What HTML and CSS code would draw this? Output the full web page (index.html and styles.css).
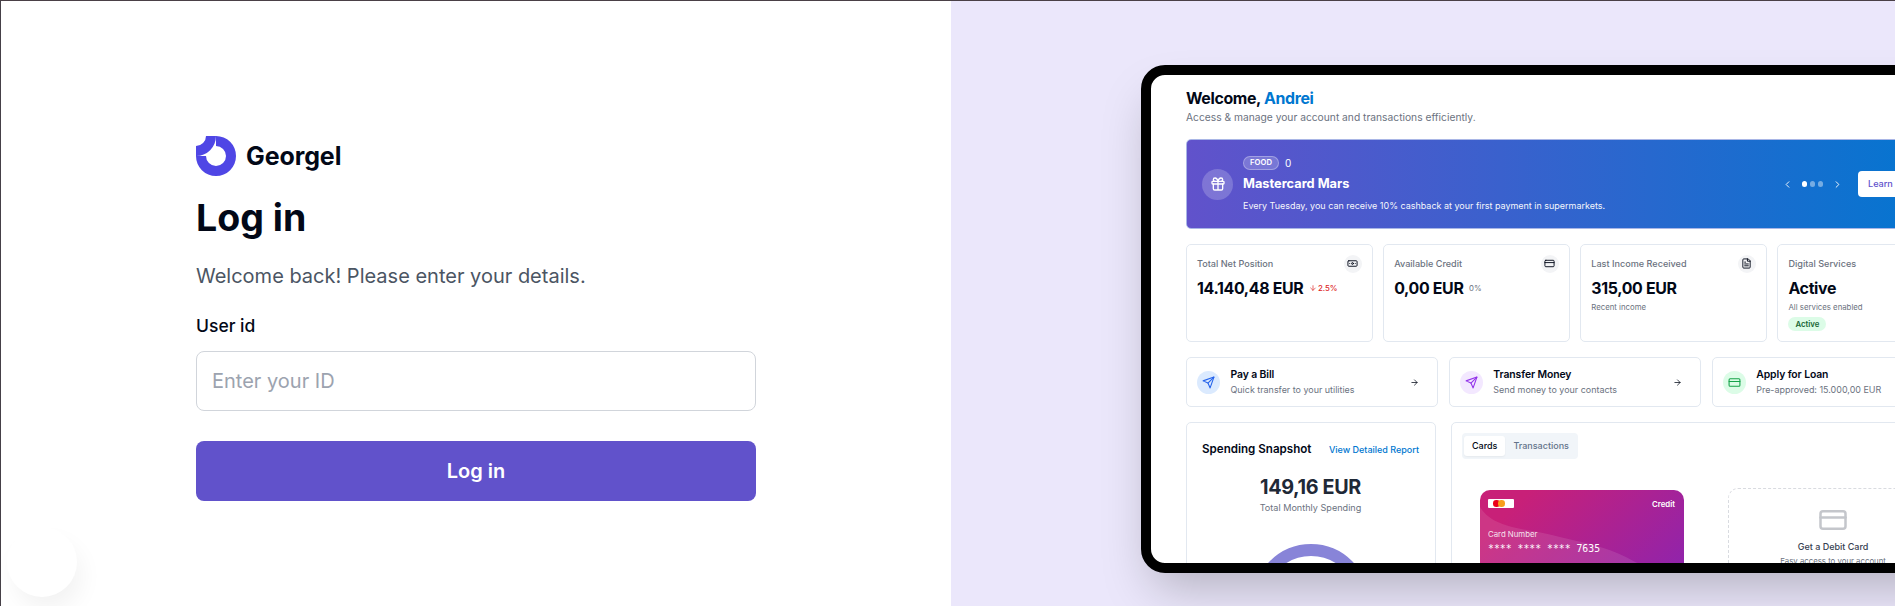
FILE: index.html
```html
<!DOCTYPE html>
<html lang="en">
<head>
<meta charset="utf-8">
<title>Georgel - Log in</title>
<link rel="stylesheet" href="styles.css">
</head>
<body>
<svg width="0" height="0" class="defs">
  <symbol id="send" viewBox="0 0 24 24"><path d="m22 2-7 20-4-9-9-4Z"/><path d="M22 2 11 13"/></symbol>
  <symbol id="card" viewBox="0 0 24 24"><rect width="20" height="14" x="2" y="5" rx="2"/><path d="M2 10h20"/></symbol>
  <symbol id="arrow" viewBox="0 0 24 24"><path d="M5 12h14"/><path d="m12 5 7 7-7 7"/></symbol>
</svg>
<div class="page">
  <main class="login">
    <div class="brand">
      <svg class="logo" viewBox="0 0 40 40"><path fill-rule="evenodd" d="M10 0H20A20 20 0 1 1 0 20V10A10 10 0 0 0 10 0ZM20 0V10A10 10 0 1 1 10 20H0A20 20 0 0 0 20 0Z"/></svg>
      <span>Georgel</span>
    </div>
    <h1>Log in</h1>
    <p class="lead">Welcome back! Please enter your details.</p>
    <label for="uid">User id</label>
    <input id="uid" type="text" placeholder="Enter your ID">
    <button class="submit">Log in</button>
  </main>
  <div class="bubble"></div>

  <aside class="showcase">
    <div class="tablet"><div class="screen">
      <h2>Welcome, <b>Andrei</b></h2>
      <p class="sub">Access &amp; manage your account and transactions efficiently.</p>

      <section class="banner">
        <div class="gift"><svg class="icon" viewBox="0 0 24 24"><rect x="3" y="8" width="18" height="4" rx="1"/><path d="M12 8v13M19 12v7a2 2 0 0 1-2 2H7a2 2 0 0 1-2-2v-7M7.500 8a2.500 2.500 0 0 1 0-5A4.800 8 0 0 1 12 8a4.800 8 0 0 1 4.500-5 2.500 2.500 0 0 1 0 5"/></svg></div>
        <div class="offer">
          <div class="tags"><span class="tag">FOOD</span><span class="zero">0</span></div>
          <h3>Mastercard Mars</h3>
          <p>Every Tuesday, you can receive 10% cashback at your first payment in supermarkets.</p>
        </div>
        <div class="pager">
          <svg class="icon" viewBox="0 0 24 24"><path d="m15 18-6-6 6-6"/></svg>
          <div class="dots"><i class="on"></i><i></i><i></i></div>
          <svg class="icon" viewBox="0 0 24 24"><path d="m9 18 6-6-6-6"/></svg>
        </div>
        <div class="learn">Learn</div>
      </section>

      <section class="stats">
        <div class="stat">
          <div class="stat-head"><span>Total Net Position</span><span class="chip"><svg class="icon" viewBox="0 0 24 24"><rect width="20" height="12" x="2" y="6" rx="2"/><circle cx="12" cy="12" r="2"/><path d="M6 12h.01M18 12h.01"/></svg></span></div>
          <div class="amount"><strong>14.140,48 EUR</strong><span class="down"><svg class="icon" viewBox="0 0 24 24"><path d="M12 5v14"/><path d="m19 12-7 7-7-7"/></svg>2.5%</span></div>
        </div>
        <div class="stat">
          <div class="stat-head"><span>Available Credit</span><span class="chip"><svg class="icon"><use href="#card"/></svg></span></div>
          <div class="amount"><strong>0,00 EUR</strong><span class="flat">0%</span></div>
        </div>
        <div class="stat">
          <div class="stat-head"><span>Last Income Received</span><span class="chip"><svg class="icon" viewBox="0 0 24 24"><path d="M15 2H6a2 2 0 0 0-2 2v16a2 2 0 0 0 2 2h12a2 2 0 0 0 2-2V7Z"/><path d="M14 2v5h6M8 9h2M8 13h8M8 17h8"/></svg></span></div>
          <div class="amount"><strong>315,00 EUR</strong></div>
          <div class="note">Recent income</div>
        </div>
        <div class="stat">
          <div class="stat-head"><span>Digital Services</span><span class="chip"></span></div>
          <div class="amount"><strong>Active</strong></div>
          <div class="note">All services enabled</div>
          <span class="badge">Active</span>
        </div>
      </section>

      <section class="actions">
        <div class="action blue"><span class="disc"><svg class="icon"><use href="#send"/></svg></span><div class="what"><h4>Pay a Bill</h4><p>Quick transfer to your utilities</p></div><svg class="icon go"><use href="#arrow"/></svg></div>
        <div class="action purple"><span class="disc"><svg class="icon"><use href="#send"/></svg></span><div class="what"><h4>Transfer Money</h4><p>Send money to your contacts</p></div><svg class="icon go"><use href="#arrow"/></svg></div>
        <div class="action green"><span class="disc"><svg class="icon"><use href="#card"/></svg></span><div class="what"><h4>Apply for Loan</h4><p>Pre-approved: 15.000,00 EUR</p></div><svg class="icon go"><use href="#arrow"/></svg></div>
      </section>

      <section class="lower">
        <div class="spending">
          <div class="spend-head"><h3>Spending Snapshot</h3><a>View Detailed Report</a></div>
          <div class="total">149,16 EUR</div>
          <p>Total Monthly Spending</p>
          <svg class="donut" viewBox="0 0 116 116"><circle cx="58" cy="58" r="52"/></svg>
        </div>
        <div class="wallet">
          <div class="tabs"><span class="active">Cards</span><span>Transactions</span></div>
          <div class="cards">
            <div class="bankcard">
              <svg class="waves" viewBox="0 0 204 120" preserveAspectRatio="none"><path d="M0 17C14 40 48 38 80 47C112 55 150 58 204 108V120H0Z"/></svg>
              <div class="bank-top"><span class="mc"><i></i><i></i></span><span class="kind">Credit</span></div>
              <div class="num-label">Card Number</div>
              <div class="num">**** **** **** 7635</div>
            </div>
            <div class="debit">
              <svg class="icon"><use href="#card"/></svg>
              <h4>Get a Debit Card</h4>
              <p>Easy access to your account</p>
            </div>
          </div>
        </div>
      </section>
    </div></div>
  </aside>
</div>
</body>
</html>
```
FILE: styles.css
```css
* { box-sizing: border-box; margin: 0; padding: 0; }
body { font-family: Inter, "Liberation Sans", sans-serif; color: #020817; background: #fff; overflow: hidden; }
.defs { position: absolute; }
.page { position: relative; width: 1895px; height: 606px; display: flex; overflow: hidden; border-top: 1px solid #4a4046; border-left: 1px solid #454047; }
.icon { fill: none; stroke: currentColor; stroke-width: 2; stroke-linecap: round; stroke-linejoin: round; display: block; flex: none; }

/* Login form */
.login { width: 950px; flex: none; padding: 135px 195px 0; display: flex; flex-direction: column; }
.brand { display: flex; align-items: center; gap: 10px; height: 40px; font-size: 25px; font-weight: 700; letter-spacing: -0.1px; }
.logo { width: 40px; height: 40px; fill: #4f46e5; }
h1 { margin-top: 19px; font-size: 37.5px; line-height: 45px; font-weight: 700; }
.lead { margin-top: 21px; font-size: 20px; line-height: 30px; color: #4b5563; }
label { margin-top: 22px; height: 25px; line-height: 25px; font-size: 17.5px; font-weight: 500; }
input { margin-top: 13px; height: 60px; border: 1px solid #d1d5db; border-radius: 8px; padding: 0 15px; font: 20px Inter, sans-serif; background: #fff; }
input::placeholder { color: #9ca3af; }
.submit { margin-top: 30px; height: 60px; border: 0; border-radius: 8px; background: #6152cb; color: #fff; font: 600 20px Inter, sans-serif; }
.bubble { position: absolute; left: 6px; top: 526px; width: 70px; height: 70px; border-radius: 50%; background: #fff; box-shadow: 6px 14px 24px -2px rgba(0,0,0,.055); }

/* Tablet preview */
.showcase { flex: 1; background: #ebe7fb; padding: 64px 0 0 190px; overflow: hidden; }
.tablet { width: 870px; height: 508px; border: 10px solid #000; border-radius: 24px; overflow: hidden; background: #fff; box-shadow: 0 25px 50px -12px rgba(0,0,0,.25); }
.screen { width: 813px; padding: 14px 0 0 35px; height: 488px; overflow: hidden; }
h2 { height: 20px; font-size: 15.9px; line-height: 20px; font-weight: 700; letter-spacing: -0.35px; }
h2 b { color: #0077d0; font-weight: 700; }
.sub { height: 16px; font-size: 10.25px; line-height: 16px; color: #6b7280; }

.banner { margin-top: 14px; height: 90px; border-radius: 5px; border: 1px solid #a9b6e6; background: linear-gradient(90deg, #6152cb, #0077d0); color: #fff; display: flex; align-items: center; padding-left: 15px; }
.gift { width: 31px; height: 31px; border-radius: 50%; background: rgba(255,255,255,.2); display: grid; place-items: center; }
.gift .icon { width: 16px; height: 16px; }
.offer { margin-left: 10px; width: 520px; }
.tags { display: flex; align-items: center; gap: 6px; height: 14px; }
.tag { width: 36px; height: 14px; line-height: 12.5px; text-align: center; border: 1px solid rgba(255,255,255,.3); border-radius: 8px; background: rgba(255,255,255,.2); font-size: 7.7px; font-weight: 600; }
.zero { font-size: 10px; }
.offer h3 { margin-top: 5px; font-size: 12.8px; line-height: 18px; font-weight: 700; }
.offer p { margin-top: 6px; font-size: 8.97px; line-height: 14px; white-space: nowrap; opacity: .95; }
.pager { display: flex; align-items: center; gap: 9.5px; margin-left: 18.5px; width: 65px; flex: none; }
.pager .icon { width: 11px; height: 11px; }
.dots { display: flex; gap: 2.5px; }
.dots i { width: 5.3px; height: 5.3px; border-radius: 50%; background: rgba(255,255,255,.42); }
.dots .on { background: #fff; }
.learn { margin-left: 11.5px; width: 78px; height: 26px; padding-left: 10px; border-radius: 4px; background: #fff; color: #6152cb; font-size: 9.1px; line-height: 26px; font-weight: 500; flex: none; }

.stats { margin-top: 15px; display: grid; grid-template-columns: repeat(4, 1fr); gap: 10.6px; height: 98px; }
.stat, .action, .spending, .wallet { border: 1px solid #e2e8f0; border-radius: 5px; background: #fff; }
.stat { padding: 9.5px 10px; }
.stat-head { display: flex; justify-content: space-between; align-items: center; height: 18px; font-size: 9.1px; color: #6b7280; font-weight: 500; }
.chip { width: 18px; height: 18px; border-radius: 50%; background: #f3f4f6; color: #020817; display: grid; place-items: center; }
.chip .icon { width: 11px; height: 11px; }
.amount { display: flex; align-items: center; gap: 5.5px; height: 21px; margin-top: 5px; }
.amount strong { font-size: 15.9px; font-weight: 700; letter-spacing: -0.33px; white-space: nowrap; }
.amount span { font-size: 7.8px; display: flex; align-items: center; gap: 1px; }
.amount .icon { width: 8px; height: 8px; }
.down { color: #dc2626; font-weight: 500; }
.flat { color: #6b7280; }
.note { height: 11px; margin-top: 3px; font-size: 7.8px; line-height: 11px; color: #6b7280; }
.badge { display: block; margin-top: 4.5px; width: 38px; height: 14px; border-radius: 7px; line-height: 14px; text-align: center; font-size: 7.8px; font-weight: 600; background: #dcfce7; color: #166534; }

.actions { margin-top: 15px; display: grid; grid-template-columns: repeat(3, 1fr); gap: 10.6px; height: 50px; }
.action { display: flex; align-items: center; padding: 0 18px 0 10px; }
.disc { width: 23px; height: 23px; border-radius: 50%; display: grid; place-items: center; }
.disc .icon { width: 13px; height: 13px; }
.blue .disc { background: #dbeafe; color: #2563eb; }
.purple .disc { background: #f3e8ff; color: #9333ea; }
.green .disc { background: #dcfce7; color: #16a34a; }
.what { flex: 1; margin-left: 10.5px; white-space: nowrap; }
.what h4 { font-size: 10.4px; line-height: 14px; font-weight: 600; letter-spacing: -0.1px; }
.what p { font-size: 8.95px; line-height: 15px; color: #6b7280; }
.go { width: 9px; height: 9px; }

.lower { margin-top: 15px; display: grid; grid-template-columns: 250px 1fr; gap: 15px; height: 200px; }
.spending { padding: 0 16px 0 15px; text-align: center; }
.spend-head { display: flex; justify-content: space-between; align-items: center; margin-top: 17px; height: 18px; }
.spend-head h3 { font-size: 11.6px; font-weight: 600; }
.spend-head a { color: #0077d0; font-size: 9px; font-weight: 500; }
.total { margin-top: 16px; font-size: 19.8px; line-height: 26px; height: 26px; font-weight: 700; letter-spacing: -0.35px; color: #1f2937; }
.spending p { font-size: 9.1px; line-height: 14px; color: #6b7280; margin-top: 1px; }
.donut { display: block; width: 116px; height: 116px; margin: 29px auto 0; }
.donut circle { fill: none; stroke: #8884d8; stroke-width: 12; }
.wallet { padding: 10px; }
.tabs { width: 116px; height: 26px; border-radius: 4px; background: #f1f5f9; padding: 3px 2px; display: flex; color: #64748b; font-size: 9px; line-height: 20px; font-weight: 500; }
.tabs span { padding: 0 8px; border-radius: 3px; }
.tabs .active { background: #fff; color: #020817; box-shadow: 0 1px 2px rgba(0,0,0,.05); }
.cards { display: flex; gap: 44px; padding: 29px 0 0 18px; align-items: flex-start; }
.bankcard { position: relative; margin-top: 2px; width: 204px; height: 130px; border-radius: 10px; overflow: hidden; background: linear-gradient(135deg, #c82078 15%, #8b24b0 90%); color: #fff; padding: 9px 9px 9px 8px; }
.waves { position: absolute; left: 0; top: 0; width: 204px; height: 120px; fill: rgba(255,255,255,.1); }
.bank-top { display: flex; justify-content: space-between; height: 22px; }
.mc { width: 26px; height: 8.5px; background: #fff; border-radius: 1px; padding: 1px 0 0 5px; display: flex; }
.mc i { width: 6.5px; height: 6.5px; border-radius: 50%; background: #eb001b; }
.mc i + i { background: #f79e1b; margin-left: -1.5px; }
.kind { font-size: 7.8px; line-height: 11px; font-weight: 600; }
.num-label { margin-top: 7px; font-size: 7.8px; line-height: 12px; opacity: .85; }
.num { margin-top: 3px; font: 9.8px/12px "DejaVu Sans Mono", monospace; }
.debit { width: 210px; height: 140px; border: 1px dashed #d9dbe0; border-radius: 10px; display: flex; flex-direction: column; align-items: center; padding-top: 16px; flex: none; }
.debit .icon { width: 30px; height: 30px; color: #c4c6cb; stroke-width: 2; }
.debit h4 { margin-top: 5px; font-size: 9px; line-height: 14px; font-weight: 500; color: #374151; }
.debit p { margin-top: 1px; font-size: 7.8px; line-height: 12px; color: #6b7280; }
```
